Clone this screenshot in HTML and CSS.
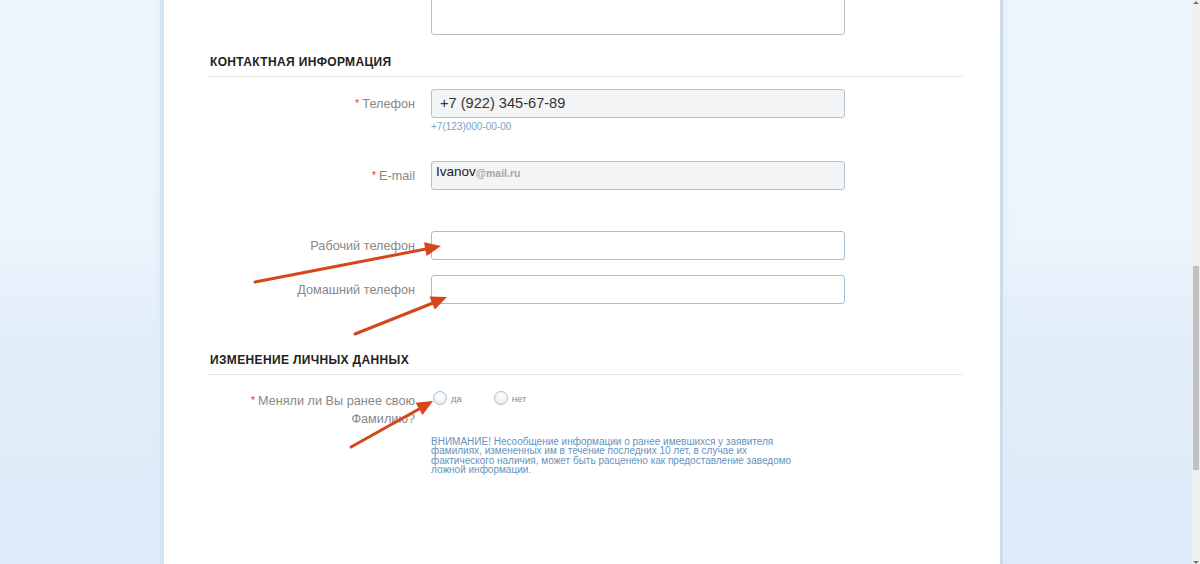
FILE: index.html
```html
<!DOCTYPE html>
<html lang="ru">
<head>
<meta charset="utf-8">
<title>Контактная информация</title>
<link rel="stylesheet" href="styles.css">
</head>
<body>
<div class="screen">
  <div class="page">
    <div class="panel">
      <div class="form">
        <div class="row row-textarea">
          <div class="label"></div>
          <div class="textarea"></div>
        </div>

        <h2 class="section">КОНТАКТНАЯ ИНФОРМАЦИЯ</h2>

        <div class="row row-phone">
          <div class="label"><span class="req">*</span>Телефон</div>
          <div class="input filled phone">+7 (922) 345-67-89</div>
          <div class="hint">+7(123)000-00-00</div>
        </div>

        <div class="row row-email">
          <div class="label"><span class="req">*</span>E-mail</div>
          <div class="input filled email"><span class="em-user">Ivanov</span><span class="em-domain">@mail.ru</span></div>
        </div>

        <div class="row row-work">
          <div class="label">Рабочий телефон</div>
          <div class="input empty"></div>
        </div>

        <div class="row row-home">
          <div class="label">Домашний телефон</div>
          <div class="input empty"></div>
        </div>

        <h2 class="section section-2">ИЗМЕНЕНИЕ ЛИЧНЫХ ДАННЫХ</h2>

        <div class="row row-radio">
          <div class="label multi"><span class="req">*</span>Меняли ли Вы ранее свою<br>Фамилию?</div>
          <div class="options">
            <label class="opt opt-yes"><span class="radio"></span>да</label>
            <label class="opt opt-no"><span class="radio"></span>нет</label>
          </div>
        </div>

        <div class="row row-warning">
          <div class="label"></div>
          <p class="warning">ВНИМАНИЕ! Несообщение информации о ранее имевшихся у заявителя<br>фамилиях, измененных им в течение последних 10 лет, в случае их<br>фактического наличия, может быть расценено как предоставление заведомо<br>ложной информации.</p>
        </div>
      </div>
    </div>

    <svg class="arrows" width="1192" height="564" viewBox="0 0 1192 564">
      <g fill="#d5461b" stroke="#d5461b" stroke-width="3" stroke-linecap="round">
        <line x1="255" y1="282" x2="426" y2="249"/>
        <polygon stroke="none" points="441,246 426.6,255.9 424,242.2"/>
        <line x1="355" y1="334" x2="433" y2="303"/>
        <polygon stroke="none" points="447,297 434.8,309.5 429.5,296.5"/>
        <line x1="351" y1="447" x2="420" y2="408.5"/>
        <polygon stroke="none" points="433,401 422.5,414.9 415.6,402.7"/>
      </g>
    </svg>
  </div>

  <div class="scrollbar">
    <div class="sb-up"></div>
    <div class="sb-track"><div class="sb-thumb"></div></div>
    <div class="sb-down"></div>
  </div>
</div>
</body>
</html>
```

FILE: styles.css
```css
html, body {
  margin: 0;
  padding: 0;
  height: 564px;
  overflow: hidden;
}

body {
  font-family: "Liberation Sans", Arial, sans-serif;
  color: #333;
}

.screen {
  display: flex;
  height: 564px;
  width: 1200px;
}

.page {
  flex: 1;
  position: relative;
  overflow: hidden;
  background: linear-gradient(180deg, #eef5fc 0%, #edf4fc 42%, #e0edf9 62%, #ddebf8 100%);
}

.panel {
  margin-left: 160px;
  width: 836px;
  height: 100%;
  background: #fff;
  border-left: 4px solid #d4e5f2;
  border-right: 3px solid #cbdbe8;
  box-shadow: 0 0 5px 2px rgba(222, 236, 248, 0.9);
}

.form {
  margin-left: 44px;
  width: 755px;
}

.row {
  display: grid;
  grid-template-columns: 207px 414px;
  column-gap: 16px;
  align-items: center;
}

.label {
  text-align: right;
  font-size: 12.7px;
  line-height: 18px;
  color: #888;
  white-space: nowrap;
}

.req {
  color: #e2413b;
  font-size: 11px;
  margin-right: 3px;
  vertical-align: 1px;
}

/* textarea cut off at the top of the viewport */
.row-textarea {
  align-items: start;
}

.textarea {
  height: 71px;
  margin-top: -36px;
  box-sizing: border-box;
  border: 1px solid #b9bcbf;
  border-radius: 3px;
  background: #fff;
}

.section {
  margin: 20px 0 0;
  padding: 0 0 7px 2px;
  font-size: 12px;
  line-height: 14px;
  font-weight: bold;
  letter-spacing: 0.35px;
  color: #222;
  border-bottom: 1px solid #e6e6e6;
}

.section-2 {
  margin-top: 49px;
}

.input {
  height: 29px;
  box-sizing: border-box;
  border: 1px solid #b5c1cb;
  border-radius: 3px;
}

.input.filled {
  background: #f3f4f5;
}

.input.empty {
  background: #fff;
  border-color: #a3bdd1;
}

.phone {
  padding-left: 8px;
  font-size: 14.6px;
  line-height: 27px;
  color: #333;
}

.hint {
  grid-column: 2;
  margin-top: 3px;
  font-size: 10px;
  line-height: 12px;
  color: #7aa3c6;
}

.email {
  display: flex;
  align-items: flex-start;
  padding: 2px 0 0 4px;
}

.em-user {
  font-size: 13.5px;
  line-height: 16px;
  color: #222;
}

.em-domain {
  margin-top: 3px;
  font-size: 10.5px;
  line-height: 12px;
  font-weight: bold;
  color: #a6a6a6;
}

.row-phone { margin-top: 12px; }
.row-email { margin-top: 28px; }
.row-work { margin-top: 41px; }
.row-home { margin-top: 15px; }

.row-radio {
  margin-top: 16px;
  align-items: start;
}

.label.multi {
  line-height: 18px;
}

.options {
  display: flex;
  align-items: center;
  height: 14px;
}

.opt {
  display: flex;
  align-items: center;
  gap: 4px;
  font-size: 9.5px;
  color: #8a8a8a;
}

.opt-yes { margin-left: 2px; }
.opt-no { margin-left: 32px; }

.radio {
  width: 14px;
  height: 14px;
  box-sizing: border-box;
  border-radius: 50%;
  border: 1px solid #a9bfd1;
  background: radial-gradient(circle at 50% 35%, #ffffff 0%, #f3f6f9 45%, #dfe7ee 100%);
}

.row-warning {
  margin-top: 9px;
  align-items: start;
}

.warning {
  margin: 0;
  font-size: 10px;
  line-height: 9.4px;
  color: #6693c0;
  white-space: nowrap;
}

.arrows {
  position: absolute;
  left: 0;
  top: 0;
  pointer-events: none;
}

.scrollbar {
  width: 8px;
  display: flex;
  flex-direction: column;
  background: #f0f0f0;
}

.sb-up, .sb-down {
  height: 10px;
  display: flex;
  justify-content: center;
  align-items: center;
}

.sb-up::before {
  content: "";
  border-left: 3px solid transparent;
  border-right: 3px solid transparent;
  border-bottom: 3px solid #777;
  margin-top: -6px;
}

.sb-down::before {
  content: "";
  border-left: 3px solid transparent;
  border-right: 3px solid transparent;
  border-top: 3px solid #777;
  margin-top: 6px;
}

.sb-track {
  flex: 1;
}

.sb-thumb {
  margin: 256px 0 0 1px;
  width: 6px;
  height: 204px;
  background: #c1c1c1;
}
```
